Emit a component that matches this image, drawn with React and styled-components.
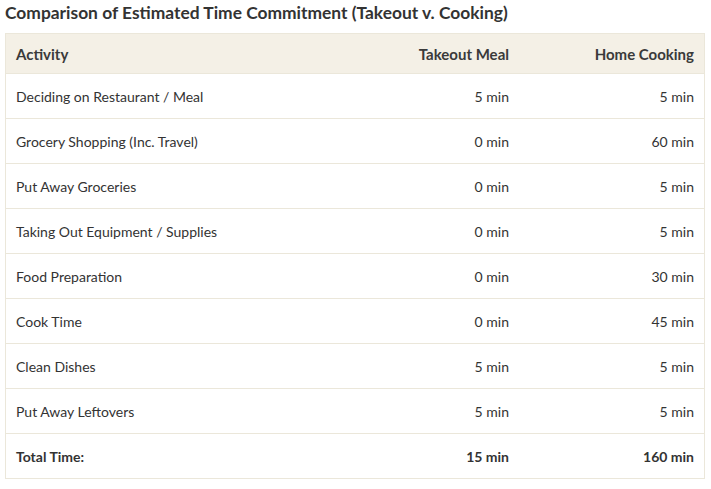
import React from "react";
import styled, { createGlobalStyle } from "styled-components";

const GlobalStyle = createGlobalStyle`
  body {
    margin: 0;
    background: #fff;
    font-family: Lato, "Liberation Sans", sans-serif;
    color: #333;
  }
`;

const Wrapper = styled.div`
  padding: 0 6px 0 5px;
`;

const Title = styled.h3`
  margin: 0;
  height: 33px;
  line-height: 25px;
  font-size: 17.4px;
  font-weight: 700;
  color: #333;
`;

const Table = styled.table`
  width: 700px;
  border-collapse: collapse;
  border: 1px solid #ebe7da;
`;

const HeadCell = styled.th`
  background: #f4f0e6;
  height: 39px;
  padding: 0 10px;
  font-size: 15px;
  font-weight: 700;
  color: #3a3a3a;
  text-align: ${(p) => (p.right ? "right" : "left")};
`;

const Row = styled.tr`
  border-top: 1px solid #ebe7da;
`;

const Cell = styled.td`
  height: 44px;
  padding: 0 10px;
  font-size: 14px;
  font-weight: ${(p) => (p.bold ? 700 : 400)};
  color: #333;
  text-align: ${(p) => (p.right ? "right" : "left")};
`;

const rows = [
  ["Deciding on Restaurant / Meal", "5 min", "5 min"],
  ["Grocery Shopping (Inc. Travel)", "0 min", "60 min"],
  ["Put Away Groceries", "0 min", "5 min"],
  ["Taking Out Equipment / Supplies", "0 min", "5 min"],
  ["Food Preparation", "0 min", "30 min"],
  ["Cook Time", "0 min", "45 min"],
  ["Clean Dishes", "5 min", "5 min"],
  ["Put Away Leftovers", "5 min", "5 min"],
];

const App = () => {
  return (
    <Wrapper>
      <GlobalStyle />
      <Title>Comparison of Estimated Time Commitment (Takeout v. Cooking)</Title>
      <Table>
        <thead>
          <tr>
            <HeadCell>Activity</HeadCell>
            <HeadCell right>Takeout Meal</HeadCell>
            <HeadCell right>Home Cooking</HeadCell>
          </tr>
        </thead>
        <tbody>
          {rows.map((r) => (
            <Row key={r[0]}>
              <Cell>{r[0]}</Cell>
              <Cell right>{r[1]}</Cell>
              <Cell right>{r[2]}</Cell>
            </Row>
          ))}
          <Row>
            <Cell bold>Total Time:</Cell>
            <Cell right bold>15 min</Cell>
            <Cell right bold>160 min</Cell>
          </Row>
        </tbody>
      </Table>
    </Wrapper>
  );
};

export default App;
